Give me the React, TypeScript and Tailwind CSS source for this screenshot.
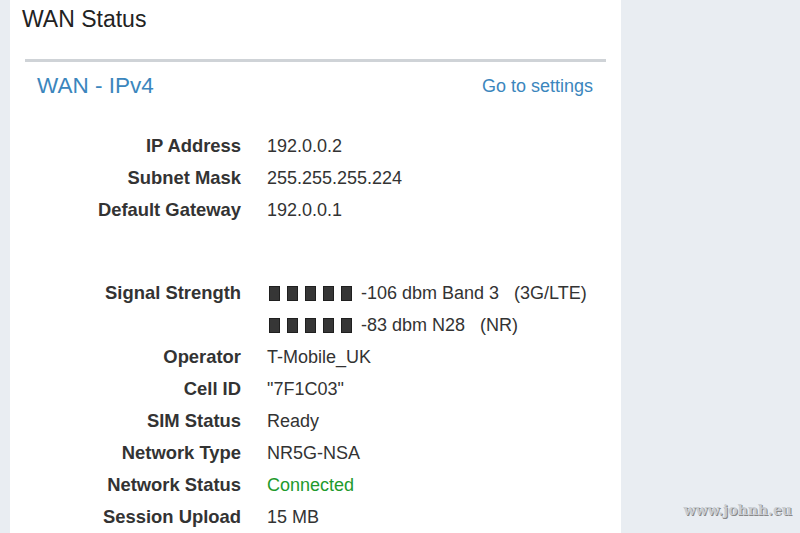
const rows1 = [
  { label: 'IP Address', value: '192.0.0.2' },
  { label: 'Subnet Mask', value: '255.255.255.224' },
  { label: 'Default Gateway', value: '192.0.0.1' },
];

const rows2 = [
  { label: 'Operator', value: 'T-Mobile_UK' },
  { label: 'Cell ID', value: '"7F1C03"' },
  { label: 'SIM Status', value: 'Ready' },
  { label: 'Network Type', value: 'NR5G-NSA' },
  { label: 'Network Status', value: 'Connected', ok: true },
  { label: 'Session Upload', value: '15 MB' },
];

function Bars() {
  return (
    <span className="ml-[2px] mr-[9px] flex gap-[7px]">
      {[0, 1, 2, 3, 4].map((i) => (
        <span key={i} className="h-[15px] w-[11px] border border-[#1f1f1f] bg-[#363636]" />
      ))}
    </span>
  );
}

function Row({ label, children }: { label: string; children?: React.ReactNode }) {
  return (
    <div className="flex h-[32px] items-center">
      <div className="w-[216px] text-right text-[18.4px] font-bold">{label}</div>
      <div className="ml-[26px] flex items-center">{children}</div>
    </div>
  );
}

export default function App() {
  return (
    <div
      className="flex h-[533px] w-[800px] overflow-hidden bg-[#e9edf2] text-[18px] text-[#333]"
      style={{ fontFamily: '"Liberation Sans", Arial, sans-serif' }}
    >
      <div className="ml-[10px] h-full w-[611px] bg-white">
        <h1 className="pl-[12px] pt-[4px] text-[23px] leading-[30px] text-[#222]">WAN Status</h1>
        <div className="mx-[15px] mt-[25px]">
          <div className="h-[3px] bg-[#cfd3d7]" />
          <div className="flex items-center justify-between pl-[12px] pr-[13px] pt-[9px]">
            <span className="text-[22.5px] leading-[30px] text-[#3b86bd]">WAN - IPv4</span>
            <span className="text-[18px] leading-[24px] text-[#3b86bd]">Go to settings</span>
          </div>
          <div className="mt-[29px]">
            {rows1.map((r) => (
              <Row key={r.label} label={r.label}>
                {r.value}
              </Row>
            ))}
            <div className="h-[51px]" />
            <Row label="Signal Strength">
              <Bars />
              <span className="whitespace-pre">-106 dbm Band 3   (3G/LTE)</span>
            </Row>
            <Row label="">
              <Bars />
              <span className="whitespace-pre">-83 dbm N28   (NR)</span>
            </Row>
            {rows2.map((r) => (
              <Row key={r.label} label={r.label}>
                <span className={r.ok ? 'text-[#1e9a2c]' : ''}>{r.value}</span>
              </Row>
            ))}
          </div>
        </div>
      </div>
      <div className="relative flex-1">
        <span className="absolute bottom-[12px] right-[8px] text-[14px] font-bold text-[#c9cdd2] [text-shadow:1px_1px_0_#888]" style={{ fontFamily: '"DejaVu Serif", serif' }}>
          www.johnh.eu
        </span>
      </div>
    </div>
  );
}
